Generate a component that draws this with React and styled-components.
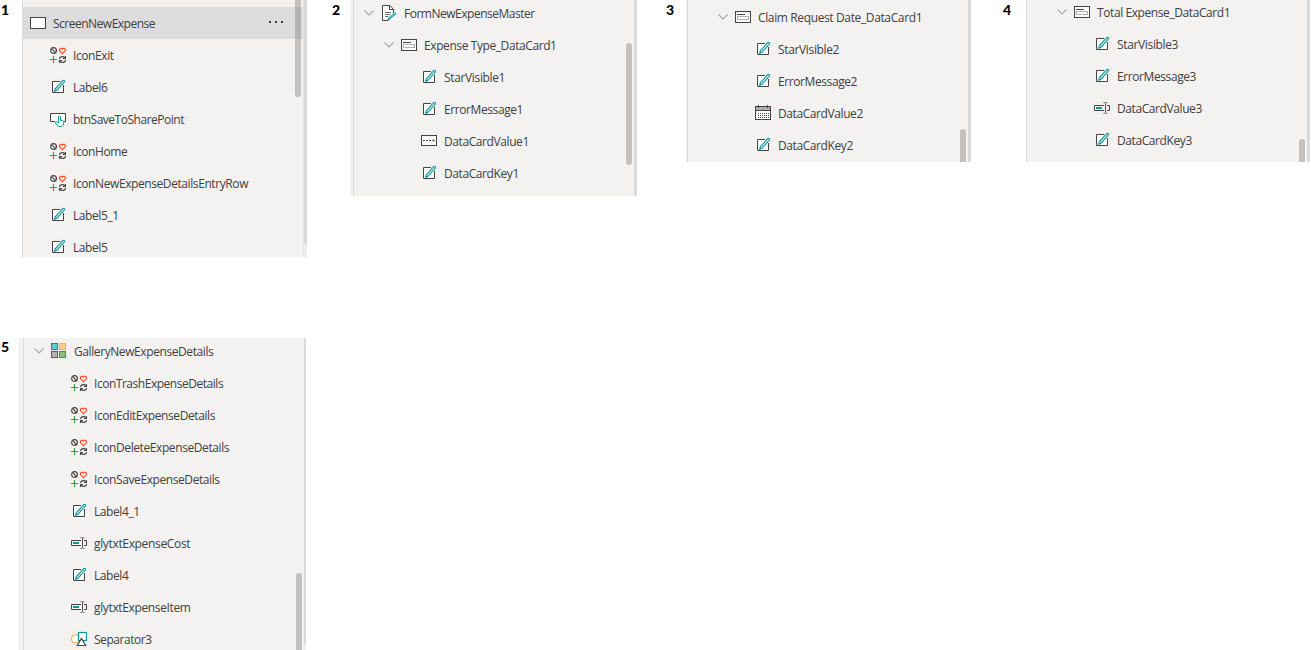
import React from 'react'
import styled, { createGlobalStyle } from 'styled-components'

const GlobalStyle = createGlobalStyle`
body {
  margin: 0;
  background: #fff;
  font-family: "Open Sans", "Noto Sans", sans-serif;
}
`

const Page = styled.div`
  width: 1311px;
  height: 650px;
  overflow: hidden;
`

const Strip = styled.div`
  display: flex;
  align-items: flex-start;
  height: ${(p) => p.$height}px;
`

const Figure = styled.section`
  display: flex;
  flex: none;
  margin-left: ${(p) => p.$gap || 0}px;
`

const Num = styled.div`
  width: ${(p) => p.$width}px;
  padding-left: 1px;
  padding-top: ${(p) => p.$top ?? 1}px;
  box-sizing: border-box;
  flex: none;
  font: 900 14px/18px Lato, sans-serif;
  color: #000;
`

const Panel = styled.div`
  position: relative;
  display: flex;
  box-sizing: border-box;
  width: ${(p) => p.$width}px;
  height: ${(p) => p.$height}px;
  overflow: hidden;
  background: #f3f2f1;
`

const Guide = styled.div`
  flex: none;
  width: 1px;
  margin-left: ${(p) => p.$left}px;
  background: #dbdad9;
`

const Tree = styled.div`
  flex: 1;
  min-width: 0;
  margin-top: ${(p) => p.$top}px;
`

const Edge = styled.div`
  flex: none;
  width: ${(p) => p.$width}px;
  background: #ececeb;
  border-left: ${(p) => (p.$line ? '1px solid #e3e2e1' : 'none')};
  box-sizing: border-box;

  &::before {
    content: "";
    display: block;
    height: ${(p) => p.$track};
    background: #dadada;
    border-bottom: 1px solid #cfcfcf;
  }
`

const Thumb = styled.div`
  position: absolute;
  right: ${(p) => p.$right}px;
  top: ${(p) => p.$top}px;
  width: 6px;
  height: ${(p) => p.$height}px;
  border-radius: 3px;
  background: rgba(96, 94, 92, 0.32);
`

const Row = styled.div`
  display: flex;
  align-items: center;
  box-sizing: border-box;
  height: 32px;
  padding-left: ${(p) => p.$indent}px;
  padding-right: 19px;
  background: ${(p) => (p.$selected ? '#dcdcdc' : 'transparent')};

  svg {
    flex: none;
    display: block;
  }
`

const Name = styled.span`
  flex: 1;
  margin-left: 7px;
  padding-top: 2px;
  font-size: 12px;
  line-height: 18px;
  letter-spacing: ${(p) => p.$spacing}px;
  color: #41403f;
  white-space: nowrap;
`

const Chevron = styled.svg`
  margin-right: 7px;
`

const dark = '#444342'
const teal = '#0f9696'

const Icon = ({ children }) => (
  <svg width="16" height="16" viewBox="0 0 16 16" fill="none">{children}</svg>
)

const icons = {
  screen: (
    <Icon>
      <rect x="0.5" y="2.5" width="15" height="11" fill="#fff" stroke={dark} />
    </Icon>
  ),
  icon: (
    <Icon>
      <circle cx="3.5" cy="3.5" r="2.9" stroke={dark} strokeWidth="1.2" />
      <path d="M1.4 1.4 5.6 5.6" stroke={dark} strokeWidth="1.2" />
      <path d="M12.5 6.6 9.9 4C8.7 2.6 10.3.6 11.8 1.5l.7.7.7-.7c1.5-.9 3.1 1.1 1.9 2.5Z" stroke="#f1582f" strokeWidth="1.25" />
      <path d="M3.5 9v7M0 12.5h7" stroke="#3c9c3c" strokeWidth="1.1" />
      <path d="M9.7 12V10.9c1.2-1.7 3.6-1.8 5-.2M15.5 9v2.5H13M15.3 13v1.1c-1.2 1.7-3.6 1.8-5 .2M9.5 16v-2.5H12" stroke={dark} strokeWidth="1.2" />
    </Icon>
  ),
  label: (
    <Icon>
      <path d="M2.5 2.5h11v11h-11Z" fill="#fff" />
      <path d="M10 2.5H2.5v11h11V6" stroke={dark} />
      <path d="M4.7 12.3 5.3 9.8 12.9 1.5c.8-.8 2.3.5 1.5 1.5L7 11.3Z" fill="#c9eaea" stroke={teal} strokeWidth="1.1" />
    </Icon>
  ),
  button: (
    <Icon>
      <path d="M.5 2.5h15v8H.5Z" fill="#fff" />
      <path d="M5 10.5H.5v-8h15v8H14" stroke={dark} />
      <path d="M8.5 12V6c0-1.3 2-1.3 2 0v3.2l2.2.4c.8.2 1.2.7 1.1 1.5l-.5 2.6c-.2 1.1-.9 1.8-2 1.8H9.2c-.6 0-1-.3-1.4-.8L5.4 12c-.4-.9.7-1.7 1.5-1Z" fill="#fff" stroke={teal} />
    </Icon>
  ),
  form: (
    <Icon>
      <path d="M1.5.5H9l3.5 3.8V15.5h-11Z" fill="#fff" />
      <path d="M12.5 8V4.3L9 .5H1.5v15H7M8.5.5v4h4" stroke={dark} />
      <path d="M4 7.5h6M4 9.5h5M4 11.5h3" stroke="#6b6a69" />
      <path d="m6.5 15.5.7-3L13 7.4c1.2-.8 3 .8 2 2.2l-5.7 5Z" fill="#4fbaba" />
      <path d="m6.5 15.5.5-2.2 1.7 1.6Z" fill={dark} />
    </Icon>
  ),
  card: (
    <Icon>
      <rect x="0.5" y="2.5" width="15" height="11" fill="#fff" stroke={dark} />
      <path d="M2 5.5h8" stroke={dark} />
      <rect x="2.5" y="7.5" width="11" height="3" stroke="#b3b1af" />
    </Icon>
  ),
  dropdown: (
    <Icon>
      <rect x="0.5" y="2.5" width="15" height="10" fill="#fff" stroke={dark} />
      <path d="M2 7.5h2M5 7.5h2M8 7.5h2" stroke={dark} />
      <path d="M10.8 6.8h3.4l-1.7 2Z" fill={dark} />
    </Icon>
  ),
  calendar: (
    <Icon>
      <rect x="0.5" y="1.5" width="15" height="13" fill="#fff" stroke={dark} />
      <path d="M1 2h14v3H1Z" fill="#b3b1af" />
      <path d="M.5 5.5h15M3.5 0v3M12.5 0v3" stroke={dark} />
      <path d="M3 8.5h11M3 10.5h11M3 12.5h11" stroke={dark} strokeDasharray="1 1" />
    </Icon>
  ),
  input: (
    <Icon>
      <path d="M.5 5.5h9v5h-9Z" fill="#fff" />
      <path d="M10 5.5H.5v5H10M13 5.5h2.5v5H13" stroke={dark} />
      <path d="M2 7h6v2H2Z" fill={teal} />
      <path d="M9.5 2.5h1l1 .8 1-.8h1M9.5 13.5h1l1-.8 1 .8h1M11.5 3v10" stroke="#555453" />
    </Icon>
  ),
  gallery: (
    <Icon>
      <rect x="0.5" y="0.5" width="6" height="6" fill="#69cbcb" stroke="#0a8f8f" />
      <rect x="8.5" y="0.5" width="6" height="6" fill="#fbd07e" stroke="#f4b04c" />
      <rect x="0.5" y="8.5" width="6" height="6" fill="#b5b3b1" stroke="#605e5c" />
      <rect x="8.5" y="8.5" width="6" height="6" fill="#84c184" stroke="#3c9c3c" />
    </Icon>
  ),
  shape: (
    <Icon>
      <circle cx="4.6" cy="7.8" r="4.1" fill="#fff" stroke="#f8b04a" strokeWidth="1.1" />
      <rect x="7.5" y="1.5" width="8" height="8" fill="#fff" stroke={teal} strokeWidth="1.2" />
      <path d="M10.5 7.5 14.7 14.5H6.3Z" fill="#fff" stroke={dark} strokeWidth="1.2" />
    </Icon>
  ),
}

const Dots = () => (
  <svg width="15" height="4" viewBox="0 0 15 4" fill="#3b3a39">
    <rect x="0" y="0" width="2" height="2" />
    <rect x="6" y="0" width="2" height="2" />
    <rect x="12" y="0" width="2" height="2" />
  </svg>
)

// item: [icon, name, level, state, letter spacing]
const TreePanel = ({ width, height, guide, top, base, edge, line, track = '100%', thumb, items }) => (
  <Panel $width={width} $height={height}>
    <Guide $left={guide} />
    <Tree $top={top}>
      {items.map(([icon, name, level, state, spacing = -0.41]) => (
        <Row
          key={name}
          $selected={state === 'selected'}
          $indent={base + level * 20 - guide - 1 - (state === 'open' ? 17 : 0)}
        >
          {state === 'open' && (
            <Chevron width="10" height="6" viewBox="0 0 10 6" fill="none">
              <path d="M.5.5 5 5 9.5.5" stroke="#aaa8a6" strokeWidth="1.1" />
            </Chevron>
          )}
          {icons[icon]}
          <Name $spacing={spacing}>{name}</Name>
          {state === 'selected' && <Dots />}
        </Row>
      ))}
    </Tree>
    <Edge $width={edge} $line={line} $track={track} />
    <Thumb $right={thumb[0]} $top={thumb[1]} $height={thumb[2]} />
  </Panel>
)

const screenItems = [
  ['screen', 'ScreenNewExpense', 0, 'selected', -0.5],
  ['icon', 'IconExit', 1],
  ['label', 'Label6', 1],
  ['button', 'btnSaveToSharePoint', 1, '', -0.48],
  ['icon', 'IconHome', 1],
  ['icon', 'IconNewExpenseDetailsEntryRow', 1],
  ['label', 'Label5_1', 1],
  ['label', 'Label5', 1],
]

const formItems = [
  ['form', 'FormNewExpenseMaster', 0, 'open', -0.49],
  ['card', 'Expense Type_DataCard1', 1, 'open'],
  ['label', 'StarVisible1', 2, '', -0.35],
  ['label', 'ErrorMessage1', 2],
  ['dropdown', 'DataCardValue1', 2],
  ['label', 'DataCardKey1', 2],
]

const dateItems = [
  ['card', 'Claim Request Date_DataCard1', 0, 'open', -0.37],
  ['label', 'StarVisible2', 1, '', -0.35],
  ['label', 'ErrorMessage2', 1],
  ['calendar', 'DataCardValue2', 1],
  ['label', 'DataCardKey2', 1],
]

const totalItems = [
  ['card', 'Total Expense_DataCard1', 0, 'open'],
  ['label', 'StarVisible3', 1, '', -0.35],
  ['label', 'ErrorMessage3', 1],
  ['input', 'DataCardValue3', 1],
  ['label', 'DataCardKey3', 1],
]

const galleryItems = [
  ['gallery', 'GalleryNewExpenseDetails', 0, 'open'],
  ['icon', 'IconTrashExpenseDetails', 1, '', -0.47],
  ['icon', 'IconEditExpenseDetails', 1],
  ['icon', 'IconDeleteExpenseDetails', 1],
  ['icon', 'IconSaveExpenseDetails', 1],
  ['label', 'Label4_1', 1],
  ['input', 'glytxtExpenseCost', 1, '', -0.34],
  ['label', 'Label4', 1],
  ['input', 'glytxtExpenseItem', 1, '', -0.36],
  ['shape', 'Separator3', 1, '', -0.46],
]

const App = () => {
  return (
    <Page>
      <GlobalStyle />
      <Strip $height={338}>
        <Figure>
          <Num $width={22}>1</Num>
          <TreePanel width={285} height={257} guide={0} top={7} base={8} edge={4} line track="242px" thumb={[6, -4, 101]} items={screenItems} />
        </Figure>
        <Figure $gap={24}>
          <Num $width={19}>2</Num>
          <TreePanel width={287} height={196} guide={3} top={-3} base={31} edge={3} thumb={[5, 43, 122]} items={formItems} />
        </Figure>
        <Figure $gap={28}>
          <Num $width={21}>3</Num>
          <TreePanel width={285} height={162} guide={1} top={1} base={49} edge={3} thumb={[5, 129, 40]} items={dateItems} />
        </Figure>
        <Figure $gap={31}>
          <Num $width={24}>4</Num>
          <TreePanel width={284} height={162} guide={0} top={-4} base={48} edge={3} thumb={[5, 139, 40]} items={totalItems} />
        </Figure>
      </Strip>
      <Strip $height={312}>
        <Figure>
          <Num $width={18} $top={0}>5</Num>
          <TreePanel width={288} height={312} guide={5} top={-3} base={33} edge={2} track="304px" thumb={[4, 235, 90]} items={galleryItems} />
        </Figure>
      </Strip>
    </Page>
  )
}

export default App
